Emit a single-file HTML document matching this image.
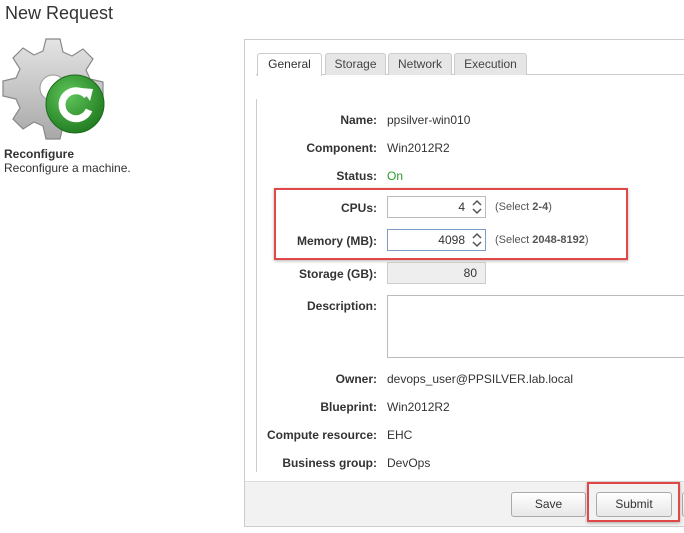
<!DOCTYPE html>
<html><head><style>
body{margin:0;width:684px;height:533px;background:#fff;font-family:"Liberation Sans",Arial,sans-serif;font-size:12px;color:#333;position:relative;overflow:hidden}
.a{position:absolute}
.lbl{position:absolute;right:307px;font-weight:bold;color:#333;white-space:nowrap}
.val{position:absolute;left:387px;white-space:nowrap}
.tab{position:absolute;top:53px;height:21px;border:1px solid #ccc;border-bottom:none;background:#e6e6e6;border-radius:3px 3px 0 0;text-align:center;line-height:21px;color:#444}
.inp{position:absolute;left:387px;width:97px;height:20px;border:1px solid #bbb;background:#fff;text-align:right;line-height:20px;box-sizing:content-box}
.btn{position:absolute;top:492px;height:23px;border:1px solid #aaa;border-radius:3px;background:linear-gradient(#fff,#e8e8e8);text-align:center;line-height:23px;color:#333}
</style></head><body>
<div class="a" style="left:5px;top:3px;font-size:18px;color:#333">New Request</div>
<svg class="a" style="left:2px;top:36px" width="106" height="104" viewBox="0 0 106 104">
<defs><linearGradient id="g" x1="0" y1="0" x2="0" y2="1"><stop offset="0" stop-color="#e4e4e4"/><stop offset="1" stop-color="#a8a8a8"/></linearGradient>
<radialGradient id="gr" cx=".4" cy=".35" r=".7"><stop offset="0" stop-color="#5fc55a"/><stop offset="1" stop-color="#1f7a1f"/></radialGradient></defs>
<path d="M44 3h14l3 13 9 4 11-7 10 10-7 11 4 9 13 3v14l-13 3-4 9 7 11-10 10-11-7-9 4-3 13H44l-3-13-9-4-11 7-10-10 7-11-4-9-13-3V45l13-3 4-9-7-11 10-10 11 7 9-4z" fill="url(#g)" stroke="#888" stroke-width="1.2"/>
<circle cx="51" cy="52" r="13" fill="#fff" stroke="#999"/>
<circle cx="73" cy="68" r="29" fill="url(#gr)" stroke="#1c6b1c"/>
<path d="M85 60a14 14 0 1 0 2 14" fill="none" stroke="#fff" stroke-width="7"/>
<path d="M79 52l12 1-3 12z" fill="#fff"/>
</svg>
<div class="a" style="left:4px;top:147px;font-weight:bold">Reconfigure</div>
<div class="a" style="left:4px;top:161px">Reconfigure a machine.</div>

<div class="a" style="left:244px;top:39px;width:450px;height:486px;border:1px solid #ccc;border-right:none;"></div>
<div class="a" style="left:256px;top:74px;width:430px;border-top:1px solid #ccc"></div>
<div class="tab" style="left:257px;width:63px;background:#fff;height:22px;color:#333">General</div>
<div class="tab" style="left:325px;width:59px">Storage</div>
<div class="tab" style="left:388px;width:62px">Network</div>
<div class="tab" style="left:454px;width:71px">Execution</div>
<div class="a" style="left:256px;top:99px;height:373px;border-left:1px solid #ccc"></div>
<div class="a" style="left:245px;top:481px;width:440px;height:44px;background:#f2f2f2;border-top:1px solid #ddd"></div>

<div class="lbl" style="top:113px">Name:</div><div class="val" style="top:113px">ppsilver-win010</div>
<div class="lbl" style="top:141px">Component:</div><div class="val" style="top:141px">Win2012R2</div>
<div class="lbl" style="top:169px">Status:</div><div class="val" style="top:169px;color:#2a9a2a">On</div>
<div class="lbl" style="top:201px">CPUs:</div>
<div class="inp" style="top:196px"><span style="margin-right:20px">4</span></div>
<svg class="a" style="left:471px;top:198px" width="12" height="18" viewBox="0 0 12 18"><path d="M2 7l4-4 4 4M2 11l4 4 4-4" fill="none" stroke="#555" stroke-width="1.5"/></svg>
<div class="val" style="left:495px;top:201px;font-size:11px;color:#555">(Select <b>2-4</b>)</div>
<div class="lbl" style="top:234px">Memory (MB):</div>
<div class="inp" style="top:229px;border-color:#7a9cc6"><span style="margin-right:20px">4098</span></div>
<svg class="a" style="left:471px;top:231px" width="12" height="18" viewBox="0 0 12 18"><path d="M2 7l4-4 4 4M2 11l4 4 4-4" fill="none" stroke="#555" stroke-width="1.5"/></svg>
<div class="val" style="left:495px;top:234px;font-size:11px;color:#555">(Select <b>2048-8192</b>)</div>
<div class="a" style="left:274px;top:188px;width:350px;height:68px;border:2px solid #e04848;box-shadow:0 1px 3px rgba(0,0,0,.3)"></div>
<div class="lbl" style="top:267px">Storage (GB):</div>
<div class="inp" style="top:262px;background:#eee;border-color:#ccc"><span style="margin-right:8px">80</span></div>
<div class="lbl" style="top:299px">Description:</div>
<div class="a" style="left:387px;top:295px;width:300px;height:61px;border:1px solid #bbb"></div>
<div class="lbl" style="top:372px">Owner:</div><div class="val" style="top:372px">devops_user@PPSILVER.lab.local</div>
<div class="lbl" style="top:400px">Blueprint:</div><div class="val" style="top:400px">Win2012R2</div>
<div class="lbl" style="top:428px">Compute resource:</div><div class="val" style="top:428px">EHC</div>
<div class="lbl" style="top:456px">Business group:</div><div class="val" style="top:456px">DevOps</div>

<div class="btn" style="left:511px;width:73px">Save</div>
<div class="btn" style="left:596px;width:74px">Submit</div>
<div class="btn" style="left:682px;width:20px"></div>
<div class="a" style="left:587px;top:482px;width:89px;height:36px;border:2px solid #e04848;box-shadow:0 1px 3px rgba(0,0,0,.3)"></div>
</body></html>
